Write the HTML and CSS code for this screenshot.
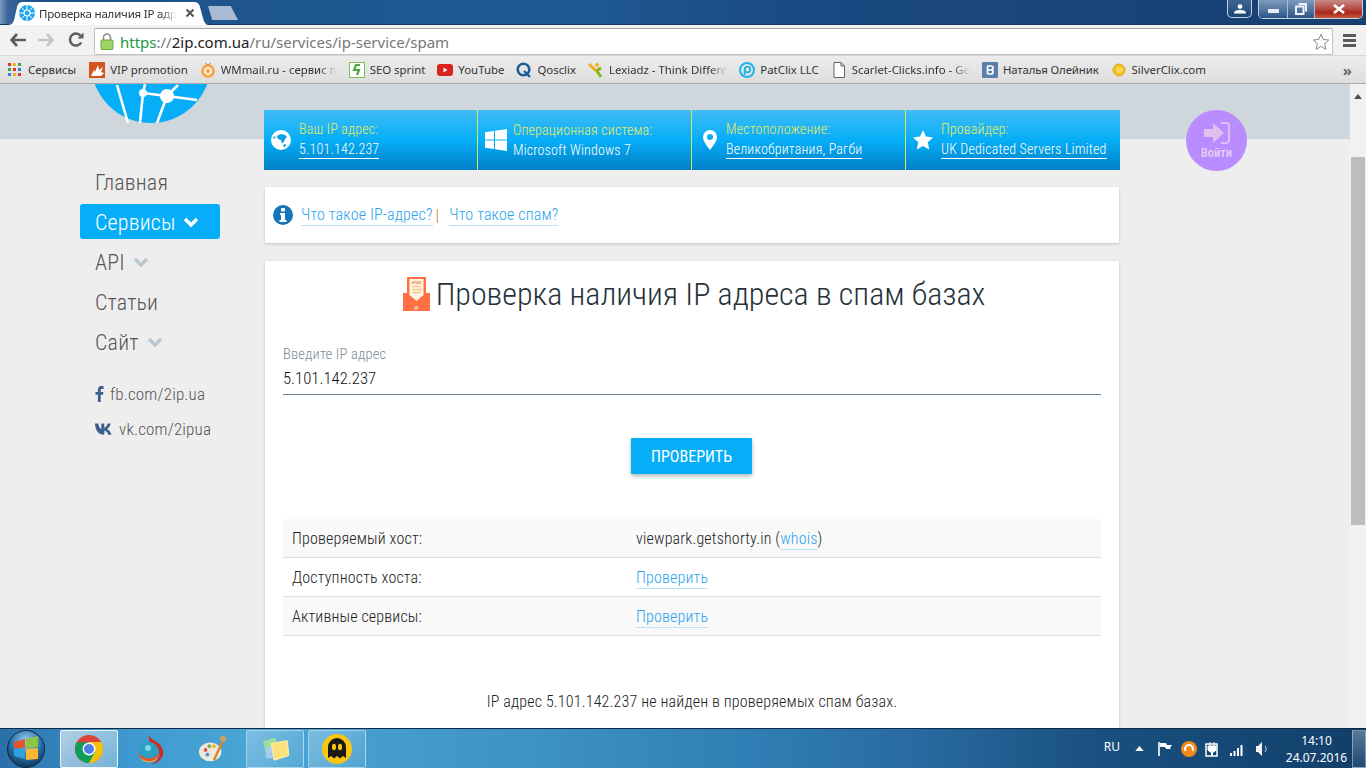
FILE: index.html
```html
<!DOCTYPE html>
<html lang="ru">
<head>
<meta charset="utf-8">
<title>Проверка наличия IP адреса в спам базах</title>
<link rel="stylesheet" href="styles.css">
</head>
<body>
<div class="window">
  <div class="tabbar">
    <div class="tab">
      <svg class="tab-fav" viewBox="0 0 16 16"><circle cx="8" cy="8" r="8" fill="#1ea7ec"/><circle cx="8" cy="8" r="3" fill="none" stroke="#fff" stroke-width="1.2"/><path d="M8 0v5M8 11v5M0 8h5M11 8h5M2.5 2.5l3.3 3.3M10.2 10.2l3.3 3.3M13.5 2.5l-3.3 3.3M5.8 10.2l-3.3 3.3" stroke="#fff" stroke-width="1"/></svg>
      <span class="tab-title">Проверка наличия IP адр</span>
      <svg class="tab-x" viewBox="0 0 10 10"><path d="M1.5 1.5l7 7M8.5 1.5l-7 7" stroke="#555" stroke-width="2"/></svg>
    </div>
    <div class="newtab"></div>
    <div class="winbtns">
      <div class="wb wb-user"><svg viewBox="0 0 12 10" class="wb-ic"><circle cx="6" cy="2.6" r="2.4" fill="#fff"/><path d="M0 9.5c0-3 3-3.5 6-3.5s6 .5 6 3.5z" fill="#fff"/></svg></div>
      <div class="wb-group">
        <div class="wb wb-min"><span class="min-bar"></span></div>
        <div class="wb wb-max"><svg viewBox="0 0 12 12" class="wb-ic2"><path d="M3.5 1h7.5v7.5M1 3.5h7.5v7.5h-7.5z" fill="none" stroke="#eef2f6" stroke-width="2"/></svg></div>
        <div class="wb wb-close"><svg viewBox="0 0 14 10" class="wb-ic3"><path d="M2 1l10 8M12 1l-10 8" stroke="#fff" stroke-width="2.6"/></svg></div>
      </div>
    </div>
  </div>
  <div class="toolbar">
    <svg class="tb-ic tb-back" viewBox="0 0 16 14"><path d="M7 1L1.5 7 7 13M2 7h14" fill="none" stroke="#5c5c5c" stroke-width="2.6"/></svg>
    <svg class="tb-ic tb-fwd" viewBox="0 0 16 14"><path d="M9 1l5.500 6L9 13M14 7H0" fill="none" stroke="#c4c4c4" stroke-width="2.6"/></svg>
    <svg class="tb-ic tb-reload" viewBox="0 0 16 16"><path d="M13.200 10.500A6 6 0 1 1 12.500 3.600" fill="none" stroke="#5c5c5c" stroke-width="2.500"/><path d="M9.500 6.500H15.500V.5z" fill="#5c5c5c"/></svg>
    <div class="omnibox">
      <svg class="lock" viewBox="0 0 14 17"><path d="M3.500 8V4.500a3.500 3.500 0 0 1 7 0V8" fill="none" stroke="#8c8c8c" stroke-width="1.600"/><rect x="1" y="7" width="12" height="9.500" rx="1" fill="#9ed36a" stroke="#6aa83a"/></svg>
      <span class="url"><span class="u-g">https</span><span class="u-m">://</span><span class="u-d">2ip.com.ua</span><span class="u-m">/ru/services/ip-service/spam</span></span>
      <svg class="star" viewBox="0 0 18 18"><path d="M9 1.300l2.300 5.200 5.500.5-4.200 3.700 1.300 5.600L9 13.400 4.100 16.300l1.300-5.600L1.200 7l5.500-.5z" fill="#fff" stroke="#8a8a8a" stroke-width="1"/></svg>
    </div>
    <div class="menu-ic"><span></span><span></span><span></span></div>
  </div>
  <div class="bookmarks">
    <div class="bm bm-apps"><span class="apps"><i class="a1"></i><i class="a2"></i><i class="a3"></i><i class="a4"></i><i class="a5"></i><i class="a6"></i><i class="a7"></i><i class="a8"></i><i class="a9"></i></span><span class="bm-t">Сервисы</span></div>
    <div class="bm"><svg class="bm-i" viewBox="0 0 16 16"><rect width="16" height="16" fill="#d2551f"/><path d="M2 14l3-6 1 2 3-7 1 5 4-3-2 5 3 1-3 3z" fill="#fff"/></svg><span class="bm-t">VIP promotion</span></div>
    <div class="bm"><svg class="bm-i" viewBox="0 0 16 16"><circle cx="8" cy="9" r="7" fill="#f5a94a"/><circle cx="8" cy="9" r="3" fill="none" stroke="#fff" stroke-width="1.500"/><path d="M5 1l3 2 3-2" fill="none" stroke="#e08a1e"/></svg><span class="bm-t bm-clip">WMmail.ru - сервис п</span></div>
    <div class="bm"><svg class="bm-i" viewBox="0 0 16 16"><rect x=".5" y=".5" width="15" height="15" fill="#fff" stroke="#7cc04a"/><path d="M11 3H7L5 8h5l-2 5" fill="none" stroke="#4aa83a" stroke-width="2.200"/></svg><span class="bm-t">SEO sprint</span></div>
    <div class="bm"><svg class="bm-i" viewBox="0 0 16 16"><rect y="2" width="16" height="12" rx="3" fill="#d8231f"/><path d="M6.500 5.500v5l4-2.500z" fill="#fff"/></svg><span class="bm-t">YouTube</span></div>
    <div class="bm"><svg class="bm-i" viewBox="0 0 16 16"><circle cx="7.500" cy="7.500" r="5.800" fill="none" stroke="#1f5f96" stroke-width="2.600"/><path d="M8 9l6 6" stroke="#1f5f96" stroke-width="2.400"/></svg><span class="bm-t">Qosclix</span></div>
    <div class="bm"><svg class="bm-i" viewBox="0 0 16 16"><circle cx="9" cy="3" r="2" fill="#f0b020"/><path d="M1 2l7 7" stroke="#f0b020" stroke-width="3"/><path d="M8 9l5-3M9 9l4 6" stroke="#86b61e" stroke-width="3"/></svg><span class="bm-t bm-clip">Lexiadz - Think Differe</span></div>
    <div class="bm"><svg class="bm-i" viewBox="0 0 16 16"><circle cx="8" cy="8" r="7" fill="none" stroke="#1cb4ea" stroke-width="2"/><circle cx="8.500" cy="7.500" r="2.800" fill="none" stroke="#1cb4ea" stroke-width="1.800"/><path d="M5.700 7.500V13" stroke="#1cb4ea" stroke-width="1.800"/></svg><span class="bm-t">PatClix LLC</span></div>
    <div class="bm"><svg class="bm-i" viewBox="0 0 16 16"><path d="M3 .5h7l3.500 3.500v11.500H3zM10 .5V4h3.500" fill="#fff" stroke="#666"/></svg><span class="bm-t bm-clip">Scarlet-Clicks.info - Ge</span></div>
    <div class="bm"><svg class="bm-i" viewBox="0 0 16 16"><rect width="16" height="16" rx="1" fill="#5b7fa8"/><path d="M5.500 4v8M5.500 4H9a2 2 0 0 1 0 4H5.500M9 8a2 2 0 0 1 0 4H5.500" fill="none" stroke="#fff" stroke-width="1.700"/></svg><span class="bm-t bm-tight">Наталья Олейник</span></div>
    <div class="bm"><svg class="bm-i" viewBox="0 0 16 16"><circle cx="8" cy="8" r="6" fill="#f2c21d" stroke="#e0a526"/><circle cx="8.500" cy="8" r="3" fill="#f9d65a"/></svg><span class="bm-t">SilverClix.com</span></div>
    <div class="bm-more">»</div>
  </div>
  <div class="viewport">
    <div class="page">
      <aside class="sidebar">
        <svg class="logo" viewBox="0 0 116 39"><circle cx="56" cy="-21" r="60" fill="#06aef8"/><path d="M22 1l11 38M48 9L45 39M48 9L72 12M72 12L62 39M72 12l30 4M72 12L83 1M48 9L50 0" stroke="#fff" stroke-width="2.600" fill="none"/><circle cx="48" cy="9" r="4" fill="#fff"/><circle cx="72" cy="12" r="7" fill="#fff"/></svg>
        <nav class="nav">
          <a class="nav-item">Главная</a>
          <a class="nav-item active">Сервисы<svg class="chev" viewBox="0 0 16 11"><path d="M2 2l6 6 6-6" fill="none" stroke="#fff" stroke-width="3.500"/></svg></a>
          <a class="nav-item">API<svg class="chev" viewBox="0 0 16 11"><path d="M2 2l6 6 6-6" fill="none" stroke="#b9c8d0" stroke-width="3.500"/></svg></a>
          <a class="nav-item">Статьи</a>
          <a class="nav-item">Сайт<svg class="chev" viewBox="0 0 16 11"><path d="M2 2l6 6 6-6" fill="none" stroke="#b9c8d0" stroke-width="3.500"/></svg></a>
        </nav>
        <div class="social">
          <a class="soc"><svg class="soc-f" viewBox="0 0 9 16"><path d="M8.500 3H6.800C6 3 5.700 3.400 5.700 4.200V6h2.700l-.4 2.700H5.700V16H2.900V8.700H.5V6h2.400V3.800C2.900 1.400 4.300 0 6.500 0c1 0 1.700.1 2 .1z" fill="#3b5f8f"/></svg>fb.com/2ip.ua</a>
          <a class="soc"><svg class="soc-v" viewBox="0 0 20 12"><path d="M0 .5h3.300c.2 2.500 1.600 5 3 5.400V.5h3v4.300c1.500-.2 2.800-2.300 3.400-4.300h3c-.5 2.700-2.400 4.700-3.600 5.500 1.200.6 3.300 2.300 4.500 5.800h-3.300c-.8-2.300-2.500-4-4-4.200v4.200h-.5C4 11.800.3 8 0 .5z" fill="#3b5f8f"/></svg>vk.com/2ipua</a>
        </div>
      </aside>
      <main class="main">
        <div class="infobar">
          <div class="ib-cell">
            <svg class="ib-ic" viewBox="0 0 20 20"><circle cx="10" cy="10" r="10" fill="#fff"/><path d="M6 6c2-2 6-2 8-1l2 2-2 2-1 3-2 1.500-1-3.500-3-1-1-2zM12 15.500l2-1.500 1.500 1-2.500 2.500zM2 8l2-2 1 1-2 2z" fill="#0a9fe6"/></svg>
            <div class="ib-tx"><span class="ib-l">Ваш IP адрес:</span><span class="ib-v ul">5.101.142.237</span></div>
          </div>
          <div class="ib-cell">
            <svg class="ib-ic ib-win" viewBox="0 0 22 22"><path d="M0 3.200l9-1.300V10.500H0zM10 1.700L22 0v10.500H10zM0 11.500h9v8.600l-9-1.300zM10 11.500h12V22l-12-1.700z" fill="#fff"/></svg>
            <div class="ib-tx"><span class="ib-l">Операционная система:</span><span class="ib-v">Microsoft Windows 7</span></div>
          </div>
          <div class="ib-cell">
            <svg class="ib-ic ib-pin" viewBox="0 0 14 20"><path fill-rule="evenodd" d="M7 0a7 7 0 0 1 7 7c0 4-4 9-7 13C4 16 0 11 0 7a7 7 0 0 1 7-7zm0 4a3 3 0 1 0 0 6 3 3 0 0 0 0-6z" fill="#fff"/></svg>
            <div class="ib-tx"><span class="ib-l">Местоположение:</span><span class="ib-v ul">Великобритания, Рагби</span></div>
          </div>
          <div class="ib-cell">
            <svg class="ib-ic" viewBox="0 0 20 20"><path d="M10 0l3 6.600 7 .8-5.200 4.800L16.200 19.500 10 16l-6.200 3.500 1.400-7.300L0 7.400l7-.8z" fill="#fff"/></svg>
            <div class="ib-tx"><span class="ib-l">Провайдер:</span><span class="ib-v ul">UK Dedicated Servers Limited</span></div>
          </div>
        </div>
        <section class="card card-links">
          <svg class="info-ic" viewBox="0 0 20 20"><circle cx="10" cy="10" r="10" fill="#1575b8"/><rect x="8" y="3" width="4" height="3.500" rx="1" fill="#fff"/><path d="M7 8h5v7h1.500v2h-7v-2H8v-5H7z" fill="#fff"/></svg>
          <a class="lnk">Что такое IP-адрес?</a><span class="sep">|</span><a class="lnk">Что такое спам?</a>
        </section>
        <section class="card card-main">
          <h1 class="title"><svg class="title-ic" viewBox="0 0 27 34"><path d="M0 16h27v18H0z" fill="#ff7043"/><path d="M4 0h19v19l-9.500 8L4 19z" fill="#ff7043"/><path d="M6.500 2h14v16l-7 6-7-6z" fill="#fff6e6"/><path d="M9 9.500h9M9 12.500h9M9 15.500h9" stroke="#ffc77d" stroke-width="1.500"/><text class="ic-spam" x="13.500" y="6.800">SPAM</text><text class="ic-ip" x="13.500" y="32.500">IP</text></svg>Проверка наличия IP адреса в спам базах</h1>
          <div class="field">
            <label class="f-label">Введите IP адрес</label>
            <div class="f-value">5.101.142.237</div>
          </div>
          <div class="btn-row"><button class="btn">ПРОВЕРИТЬ</button></div>
          <div class="tbl">
            <div class="row"><div class="c1">Проверяемый хост:</div><div>viewpark.getshorty.in (<a class="lnk">whois</a>)</div></div>
            <div class="row"><div class="c1">Доступность хоста:</div><div><a class="lnk">Проверить</a></div></div>
            <div class="row"><div class="c1">Активные сервисы:</div><div><a class="lnk">Проверить</a></div></div>
          </div>
          <p class="result">IP адрес 5.101.142.237 не найден в проверяемых спам базах.</p>
        </section>
      </main>
      <div class="login-col">
        <a class="login">
          <svg class="login-ic" viewBox="0 0 26 22"><path d="M0 7h9V1l11 10-11 10v-6H0z" fill="#e0bff0"/><path d="M17 1h5a3 3 0 0 1 3 3v14a3 3 0 0 1-3 3h-5" fill="none" stroke="#e0bff0" stroke-width="2"/></svg>
          <span>Войти</span>
        </a>
      </div>
    </div>
    <div class="scrollbar">
      <span class="sb-up"></span>
      <span class="sb-thumb"></span>
    </div>
  </div>
  <div class="taskbar">
    <div class="orb"><svg viewBox="0 0 38 38"><defs><radialGradient id="o" cx=".5" cy=".3" r=".75"><stop offset="0" stop-color="#a5d4f0"/><stop offset=".55" stop-color="#2a70a8"/><stop offset="1" stop-color="#0c2c4c"/></radialGradient></defs><circle cx="19" cy="19" r="18.500" fill="url(#o)" stroke="#0b2a48"/><path d="M7 12l11-3v9H7z" fill="#e8542a"/><path d="M19 9l12-3v11l-12 1z" fill="#8cc63f"/><path d="M7 19h11v10l-11-3z" fill="#2f9fe0"/><path d="M19 19l12-1v11l-12 1z" fill="#f7b731"/></svg></div>
    <div class="tk tk-active"><svg class="tk-i" viewBox="0 0 28 28"><circle cx="14" cy="14" r="14" fill="#db4437"/><path d="M14 28a14 14 0 0 0 12.100-21H14l-6 10.500z" fill="#f4c20d"/><path d="M14 28l6.100-10.500L14 7 2 7.500 1.900 7A14 14 0 0 0 14 28z" fill="#0f9d58"/><path d="M14 28a14 14 0 0 0 12.100-21H14l6 10.500z" fill="#f4c20d"/><circle cx="14" cy="14" r="6.500" fill="#fff"/><circle cx="14" cy="14" r="5" fill="#4d7fe8"/></svg></div>
    <div class="tk tk-plain"><svg class="tk-i tk-torch" viewBox="0 0 28 32"><path d="M14 0c-4 4 1 6 7 10 6 5 7 12 2 17-3 3-6 4-9 4 8-2 11-10 6-16C16 11 8 7 14 0z" fill="#d8261c"/><circle cx="12" cy="19" r="10" fill="#2a9fc0"/><path d="M2 20c3 6 15 8 20 0v3c-4 7-16 7-20 0z" fill="#e8552a"/><path d="M3 24c3 5 13 6 18 0l-2 3c-4 3-10 3-14 0z" fill="#f0b429"/><circle cx="11" cy="15" r="3" fill="#7fd4e8"/></svg></div>
    <div class="tk tk-plain"><svg class="tk-i tk-paint" viewBox="0 0 30 30"><ellipse cx="12" cy="18" rx="12" ry="10" fill="#efe9dc"/><circle cx="7" cy="16" r="2" fill="#d9534f"/><circle cx="11" cy="12" r="2" fill="#6cb33f"/><circle cx="16" cy="12" r="2" fill="#e8b923"/><circle cx="9" cy="21" r="2" fill="#4a90d9"/><path d="M27 3L16 27" stroke="#d9822b" stroke-width="2.500"/><path d="M24 0l6 3-3 5-5-3z" fill="#c9a26b"/></svg></div>
    <div class="tk"><svg class="tk-i" viewBox="0 0 30 28"><path d="M2 6l13-4 4 12-13 6z" fill="#9fdc9c"/><path d="M5 12h14v12H5z" fill="#a9cdf0" opacity=".9"/><path d="M11 8l17-3 2 16-16 5z" fill="#fbe27c" stroke="#fff2b8"/></svg></div>
    <div class="tk"><svg class="tk-i tk-ghost" viewBox="0 0 30 30"><circle cx="15" cy="15" r="15" fill="#fcc50f"/><path d="M6 24V13a9 9 0 0 1 18 0v11l-3-2-3 2.500-3-2.500-3 2.500-3-2.500z" fill="#1a1a14"/><ellipse cx="12" cy="13" rx="2" ry="3.200" fill="#fcc50f"/><ellipse cx="18" cy="13" rx="2" ry="3.200" fill="#fcc50f"/></svg></div>
    <div class="tray">
      <span class="lang">RU</span>
      <svg class="tr-i tr-up" viewBox="0 0 10 6"><path d="M5 0l5 6H0z" fill="#fff"/></svg>
      <svg class="tr-i tr-flag" viewBox="0 0 16 16"><path d="M2 1v14" stroke="#fff" stroke-width="1.600"/><path d="M3 2h6l1 2h5l-2 3 1 1H9L8 6H3z" fill="#fff"/></svg>
      <svg class="tr-i tr-o" viewBox="0 0 16 16"><circle cx="8" cy="8" r="8" fill="#f08a1c"/><path d="M4.500 10a4 4 0 1 1 7 0" fill="none" stroke="#fff" stroke-width="2"/></svg>
      <svg class="tr-i tr-pw" viewBox="0 0 16 16"><path d="M1 3h11v12H1z" fill="none" stroke="#fff" stroke-width="1.500"/><path d="M5 1v4M9 1v4M3 5h8v4l-2 2H5L3 9z" fill="#fff" stroke="#fff"/><path d="M7 11v4" stroke="#fff" stroke-width="2"/></svg>
      <svg class="tr-i tr-sig" viewBox="0 0 16 14"><path d="M1 11h2v3H1zM4.500 9h2v5h-2zM8 6h2v8H8zM11.500 3h2v11h-2z" fill="#fff"/></svg>
      <svg class="tr-i tr-sp" viewBox="0 0 14 16"><path d="M1 5h2l4-4v14l-4-4H1z" fill="#f2f2f2"/><path d="M10 5c1.500 2 1.500 4 0 6" fill="none" stroke="#c8d4e0"/></svg>
      <div class="clock"><span>14:10</span><span>24.07.2016</span></div>
      <div class="showdesk"></div>
    </div>
  </div>
</div>
</body>
</html>
```
FILE: styles.css
```css
* { box-sizing: border-box; }
html, body { margin: 0; height: 100%; overflow: hidden; }
body { font-family: "Roboto Condensed", "Roboto", "Liberation Sans Narrow", sans-serif; font-stretch: 75%; letter-spacing: .17px; color: #333; }
.window { display: flex; flex-direction: column; height: 768px; width: 1366px; }

/* tab strip */
.tabbar { height: 25px; flex: none; display: flex; align-items: flex-end; padding-left: 8px;
  background: linear-gradient(90deg, #7f9abb 0, #3a659a 8px, #1d5289 30px, #1f5a95 560px, #1a4a82 800px, #173f70 1366px);
  border-bottom: 1px solid #123a63; font-family: "Noto Sans", sans-serif; font-stretch: normal; letter-spacing: 0; position: relative; }
.tab { width: 200px; height: 24px; margin-bottom: -1px; background: #fff; display: flex; align-items: center; padding: 0 13px 0 11px;
  clip-path: path("M0 24 C5 24 6 20 7 15 L9 6 C10 2 12 1 15 1 L185 1 C189 1 191 2 192 6 L195 17 C196 21 198 24 200 24 Z"); }
.tab-fav { width: 16px; height: 16px; flex: none; margin-right: 4px; }
.tab-title { font-size: 11.5px; letter-spacing: -.2px; color: #333; white-space: nowrap;
  -webkit-mask-image: linear-gradient(90deg, #000 88%, transparent); mask-image: linear-gradient(90deg, #000 88%, transparent); }
.tab-x { width: 10px; height: 10px; margin-left: auto; flex: none; }
.newtab { width: 30px; height: 14px; margin: 0 0 4px 0; background: #a8bbd3; clip-path: polygon(0 0, 76% 0, 100% 100%, 14% 100%); }
.winbtns { margin-left: auto; display: flex; align-self: flex-start; gap: 6px; margin-right: 3px; }
.wb { height: 18px; display: flex; align-items: center; justify-content: center; }
.wb-user { width: 25px; border: 1px solid #c5d2e0; border-top: 0; border-radius: 0 0 5px 5px; background: linear-gradient(#3f6592, #1c4678); }
.wb-ic { width: 12px; height: 10px; }
.wb-group { display: flex; border: 1px solid #c5d2e0; border-top: 0; border-radius: 0 0 5px 5px; overflow: hidden; }
.wb-min { width: 29px; background: linear-gradient(#7d9bbd, #2a5688); border-right: 1px solid #a9bcd1; }
.min-bar { width: 11px; height: 4px; background: #e8edf3; margin-top: 3px; }
.wb-max { width: 27px; background: linear-gradient(#7d9bbd, #2a5688); border-right: 1px solid #a9bcd1; }
.wb-ic2 { width: 12px; height: 12px; }
.wb-close { width: 47px; background: linear-gradient(#c98a84 0, #b5504a 45%, #a8281c 70%, #c85a3c); }
.wb-ic3 { width: 14px; height: 10px; }

/* toolbar */
.toolbar { height: 30px; flex: none; background: #f2f2f2; display: flex; align-items: center; position: relative; }
.tb-ic { flex: none; }
.tb-back { width: 16px; height: 14px; margin-left: 10px; }
.tb-fwd { width: 16px; height: 14px; margin-left: 12px; }
.tb-reload { width: 16px; height: 16px; margin-left: 14px; }
.omnibox { margin-left: 10px; width: 1239px; height: 27px; margin-top: 3px; background: #fff; border: 1px solid #c0c0c0; border-top-color: #a8a8a8; border-radius: 2px; display: flex; align-items: center; padding-left: 5px; font-family: "Noto Sans", sans-serif; font-stretch: normal; letter-spacing: 0; }
.lock { width: 14px; height: 17px; flex: none; }
.url { margin-left: 6px; font-size: 15px; white-space: nowrap; }
.u-g { color: #1a9a3c; } .u-m { color: #777; } .u-d { color: #222; }
.star { width: 18px; height: 18px; margin-left: auto; margin-right: 2px; }
.menu-ic { display: flex; flex-direction: column; gap: 2px; margin-left: 10px; width: 13px; }
.menu-ic span { height: 3px; background: #5a5a5a; display: block; }

/* bookmarks */
.bookmarks { height: 29px; flex: none; display: flex; align-items: center; padding-left: 8px; gap: 12px;
  background: linear-gradient(#ececec, #dedede); border-bottom: 1px solid #a8a8a8; border-top: 1px solid #d8d8d8;
  font-family: "Noto Sans", sans-serif; font-stretch: normal; letter-spacing: 0; font-size: 11.4px; color: #333; }
.bm { display: flex; align-items: center; gap: 5px; white-space: nowrap; }
.bm-apps { margin-right: 1px; }
.bm-tight { letter-spacing: -.1px; }
.bm-i { width: 16px; height: 16px; flex: none; }
.apps { display: grid; grid-template-columns: repeat(3, 3px); gap: 2px; margin-right: 2px; }
.apps i { width: 3px; height: 3px; display: block; }
.a1 { background: #e0352b; } .a2 { background: #f2b21e; } .a3 { background: #3fa34d; }
.a4 { background: #3fa34d; } .a5 { background: #e0352b; } .a6 { background: #2d7fe0; }
.a7 { background: #2d7fe0; } .a8 { background: #f2b21e; } .a9 { background: #e0352b; }
.bm-clip { -webkit-mask-image: linear-gradient(90deg, #000 85%, transparent); mask-image: linear-gradient(90deg, #000 85%, transparent); }
.bm-more { margin-left: auto; margin-right: 14px; font-size: 15px; font-weight: 700; color: #666; }

/* page */
.viewport { flex: 1; min-height: 0; display: flex; }
.page { flex: 1; min-width: 0; overflow: hidden; display: flex; padding-left: 80px;
  background: linear-gradient(#cfd6dc 55px, #eeeeee 55px); }
.sidebar { width: 140px; flex: none; margin-right: 44px; }
.logo { display: block; width: 116px; height: 39px; margin-left: 15px; margin-bottom: 42px; }
.nav-item { display: flex; align-items: center; height: 35px; margin-bottom: 5px; padding-left: 15px; font-size: 22px; font-weight: 300; color: #555; border-radius: 3px; }
.nav-item.active { background: #06aef8; color: #fff; margin-top: -1px; margin-bottom: 6px; padding-top: 1px; }
.chev { width: 16px; height: 11px; margin-left: 8px; }
.social { margin-top: 16px; padding-left: 15px; }
.soc { display: flex; align-items: center; height: 35px; font-size: 17px; font-weight: 300; color: #555; }
.soc-f { width: 9px; height: 16px; margin-right: 6px; }
.soc-v { width: 20px; height: 12px; margin-right: 4px; }
.main { width: 856px; flex: none; padding-top: 26px; }
.infobar { display: flex; height: 60px; background: linear-gradient(#40bdf6 0, #06aef8 50%, #0080c4 100%); }
.ib-cell { width: 214px; display: flex; align-items: center; border-right: 1px solid #d9e84e; padding-left: 7px; }
.ib-cell:last-child { border-right: 0; }
.ib-ic { width: 20px; height: 20px; flex: none; margin-right: 8px; }
.ib-win { width: 22px; height: 22px; margin-right: 6px; }
.ib-pin { margin-left: 4px; margin-right: 9px; width: 14px; }
.ib-tx { display: flex; flex-direction: column; align-items: flex-start; gap: 3px; font-size: 14px; line-height: 17px; white-space: nowrap; }
.ib-l { color: #e6ee5c; font-weight: 300; }
.ib-v { color: #fff; font-weight: 300; }
.ul { border-bottom: 1px solid #fff; }
.card { background: #fff; margin: 0 1px; box-shadow: 0 1px 3px rgba(0,0,0,.18); }
.card-links { margin-top: 17px; height: 56px; display: flex; align-items: center; padding-left: 8px; font-size: 16px; font-weight: 300; }
.info-ic { width: 20px; height: 20px; margin-right: 8px; flex: none; }
.lnk { color: #2aa3ef; border-bottom: 1px solid #b3e5fc; font-weight: 300; padding-bottom: 1px; }
.sep { color: #c8791e; margin: 0 10px 0 3px; }
.card-main { margin-top: 18px; padding: 14px 18px 40px; }
.title { margin: 0; padding-left: 4px; display: flex; align-items: center; justify-content: center; font-size: 32px; font-weight: 300; line-height: 38px; letter-spacing: 0; color: #263238; }
.title-ic { width: 27px; height: 34px; margin-right: 6px; }
.ic-spam { font-family: "Liberation Sans", sans-serif; font-size: 3.600px; font-weight: 700; fill: #f08a60; text-anchor: middle; letter-spacing: 0; }
.ic-ip { font-family: "Liberation Sans", sans-serif; font-size: 4.500px; font-weight: 700; fill: #ffe2d4; text-anchor: middle; letter-spacing: 0; }
.field { margin-top: 33px; border-bottom: 1px solid #6d8596; }
.f-label { display: block; font-size: 14.5px; font-weight: 300; color: #7a8a96; line-height: 18px; }
.f-value { font-size: 16.700px; font-weight: 300; letter-spacing: 0; line-height: 30px; color: #111; }
.btn-row { display: flex; justify-content: center; margin-top: 43px; padding-right: 1px; }
.btn { width: 121px; height: 36px; border: 0; background: #06aef8; color: #fff; font-family: inherit; font-stretch: 75%; font-size: 16px; letter-spacing: 0; border-radius: 1px; box-shadow: 0 2px 4px rgba(0,0,0,.3); }
.tbl { margin-top: 45px; font-size: 16px; font-weight: 300; color: #222; }
.row { display: flex; align-items: center; height: 39px; border-bottom: 1px solid #ddd; padding-left: 9px; }
.row:nth-child(odd) { background: #f9f9f9; }
.c1 { width: 344px; }
.result { margin: 56px 0 0; text-align: center; font-size: 16px; font-weight: 300; color: #222; }
.login-col { flex: none; padding: 26px 0 0 66px; }
.login { width: 61px; height: 61px; border-radius: 50%; background: #b98cff; display: flex; flex-direction: column; align-items: center; justify-content: center; gap: 2px; color: #e6d0f5; font-size: 12.500px; letter-spacing: 0; font-weight: 500; line-height: 14px; }
.login-ic { width: 26px; height: 22px; }
.scrollbar { width: 16px; flex: none; background: #f1f1f1; display: flex; flex-direction: column; align-items: center; padding-top: 10px; }
.sb-up { width: 0; height: 0; border: 4px solid transparent; border-top: 0; border-bottom: 5px solid #505050; }
.sb-thumb { width: 14px; height: 368px; margin-top: 58px; background: #bdbdbd; }

/* taskbar */
.taskbar { height: 40px; flex: none; display: flex; align-items: center; padding-left: 7px; border-top: 1px solid #0e2a44;
  background: linear-gradient(90deg, #2a6fa8 0, #3f9ad0 130px, #4aa6d6 260px, #3f93c6 520px, #2f7db4 760px, #2a6ca4 900px, #19507f 1100px, #123f6a 1366px);
  font-family: "Noto Sans", sans-serif; font-stretch: normal; letter-spacing: 0; color: #fff; }
.orb { width: 38px; height: 38px; flex: none; margin-right: 15px; }
.orb svg { width: 38px; height: 38px; display: block; }
.tk { width: 58px; height: 38px; margin-right: 4px; flex: none; display: flex; align-items: center; justify-content: center; border: 1px solid rgba(220,240,255,.55); border-radius: 2px; background: linear-gradient(135deg, rgba(255,255,255,.28), rgba(255,255,255,.06)); }
.tk-active { background: linear-gradient(135deg, rgba(255,255,255,.62), rgba(255,255,255,.28)); border-color: rgba(255,255,255,.85); }
.tk-plain { background: none; border-color: transparent; margin-right: 4px; }
.tk-i { width: 28px; height: 28px; }
.tk-torch { width: 28px; height: 34px; }
.tk-ghost { width: 30px; height: 30px; }
.tray { margin-left: auto; display: flex; align-items: center; height: 100%; }
.lang { font-size: 12px; margin-right: 15px; padding-bottom: 4px; }
.tr-i { flex: none; }
.tr-up { width: 9px; height: 5px; margin-right: 13px; }
.tr-flag { width: 16px; height: 16px; margin-right: 8px; }
.tr-o { width: 16px; height: 16px; margin-right: 8px; }
.tr-pw { width: 16px; height: 16px; margin-right: 8px; }
.tr-sig { width: 16px; height: 14px; margin-right: 10px; }
.tr-sp { width: 14px; height: 16px; margin-right: 15px; }
.clock { width: 65px; display: flex; flex-direction: column; align-items: center; font-size: 12px; line-height: 17px; margin-right: 3px; }
.showdesk { width: 14px; height: 38px; border: 1px solid rgba(200,220,240,.5); background: linear-gradient(rgba(255,255,255,.3), rgba(255,255,255,.05)); }
```
